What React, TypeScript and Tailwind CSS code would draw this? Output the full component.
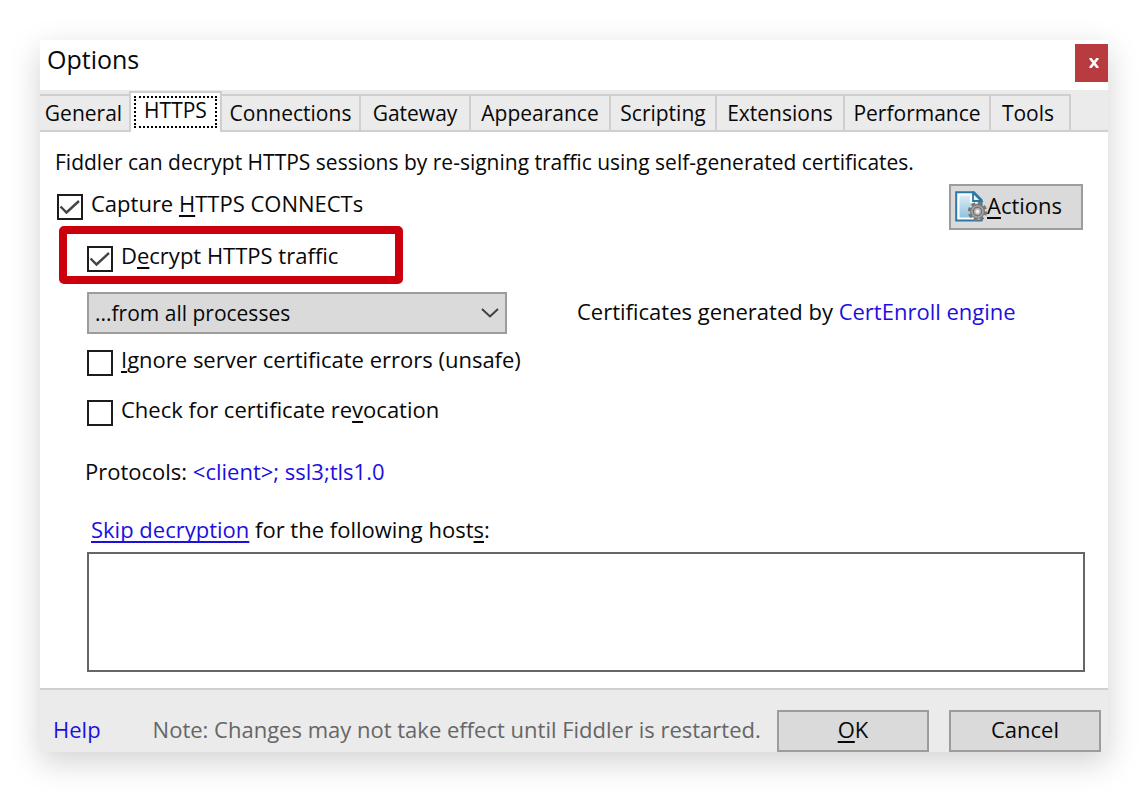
import { useState } from "react";
import type { ReactNode } from "react";

const tabs = [
  { name: "General", width: "w-[91px] pr-[2px]" },
  { name: "HTTPS", width: "w-[93px]" },
  { name: "Connections", width: "w-[141px]" },
  { name: "Gateway", width: "w-[112px]" },
  { name: "Appearance", width: "w-[142px]" },
  { name: "Scripting", width: "w-[108px]" },
  { name: "Extensions", width: "w-[130px]" },
  { name: "Performance", width: "w-[148px]" },
  { name: "Tools", width: "w-[82px] pr-1" },
];

function Key({ children }: { children: ReactNode }) {
  return (
    <span className="underline decoration-2 underline-offset-3 [text-decoration-skip-ink:none]">
      {children}
    </span>
  );
}

function CheckRow({ id, initial = false, children }: { id: string; initial?: boolean; children: ReactNode }) {
  const [checked, setChecked] = useState(initial);
  return (
    <div className="flex h-[30px] items-center gap-2">
      <span className="grid size-[26px] shrink-0">
        <input
          id={id}
          type="checkbox"
          checked={checked}
          onChange={(e) => setChecked(e.target.checked)}
          className="col-start-1 row-start-1 size-[26px] appearance-none border-2 border-[#1c1c1c] bg-white"
        />
        {checked && (
          <svg
            viewBox="0 0 26 26"
            className="pointer-events-none col-start-1 row-start-1 size-[26px]"
            fill="none"
            stroke="#444"
            strokeWidth="2.4"
            aria-hidden="true"
          >
            <path d="M3.5 12.5L9.5 18.5L22 7" />
          </svg>
        )}
      </span>
      <label htmlFor={id} className="pb-[7px] leading-[23px]">
        {children}
      </label>
    </div>
  );
}

function ActionsIcon() {
  return (
    <svg viewBox="0 0 32 32" className="size-8 shrink-0" aria-hidden="true">
      <defs>
        <linearGradient id="page" x1="0" y1="0" x2="0" y2="1">
          <stop offset="0" stopColor="#dcecf5" />
          <stop offset="1" stopColor="#8fc3dc" />
        </linearGradient>
      </defs>
      <path d="M1.2 1.2H19L26.5 9V29.5H1.2Z" fill="#fff" stroke="#2a78a8" strokeWidth="2" />
      <path d="M4.5 4.5H15V12H23V26.5H4.5Z" fill="url(#page)" />
      <path d="M18 1.5V10H26.5Z" fill="#e8f4fa" stroke="#2a78a8" strokeWidth="1.8" />
      <circle cx="22.5" cy="20.5" r="8.2" fill="none" stroke="#777" strokeWidth="3" strokeDasharray="3.8 2.64" />
      <circle cx="22.5" cy="20.5" r="5.4" fill="#b5b5b5" stroke="#777" strokeWidth="4" />
      <circle cx="22.5" cy="20.5" r="5.6" fill="none" stroke="#a9a9a9" strokeWidth="1.4" />
      <circle cx="22.5" cy="20.5" r="2" fill="#eee" />
    </svg>
  );
}

export default function App() {
  const [active, setActive] = useState("HTTPS");
  return (
    <div className="min-h-screen bg-white p-10 font-['Open_Sans','Noto_Sans',sans-serif] text-[22px] text-[#080808]">
      <div role="dialog" aria-labelledby="title" className="bg-white shadow-[0_10px_30px_rgba(0,0,0,0.18)]">
        <header className="flex h-[50px] items-start justify-between pl-[7px]">
          <h1 id="title" className="text-[25px] leading-[38px]">
            Options
          </h1>
          <button
            type="button"
            aria-label="Close"
            className="mt-1 flex h-[38px] w-[33px] items-center justify-center bg-[#b83b3f] pl-1"
          >
            <svg viewBox="0 0 10 10" className="size-[10px]" stroke="#fff" strokeWidth="2.6" aria-hidden="true">
              <path d="M1 0L9 10M9 0L1 10" />
            </svg>
          </button>
        </header>

        <div
          role="tablist"
          className="flex h-[42px] items-end bg-[#ebebeb] text-[21px] shadow-[inset_0_-2px_0_#cfcfcf]"
        >
          {tabs.map(({ name, width }, i) => {
            const on = name === active;
            return (
              <button
                key={name}
                type="button"
                role="tab"
                aria-selected={on}
                onClick={() => setActive(name)}
                className={`${width} ${i === 0 ? "border-l-0" : "-ml-[2px] border-l-2"} shrink-0 border-t-2 border-r-2 border-[#cfcfcf] ${
                  on ? "z-10 h-[41px] bg-white p-[3px] pb-1" : "h-[38px] border-b-2 bg-[#ebebeb] pt-[2px]"
                }`}
              >
                {on ? (
                  <span className="flex h-8 items-center justify-center border-2 border-dotted border-black pb-[2px]">
                    {name}
                  </span>
                ) : (
                  name
                )}
              </button>
            );
          })}
        </div>

        <main className="pt-4 pr-[23px] pb-4 pl-[15px]">
          <p className="text-[21px] leading-7">
            Fiddler can decrypt HTTPS sessions by re-signing traffic using self-generated certificates.
          </p>

          <div className="mt-2 flex h-[46px] items-center justify-between pl-[2px]">
            <CheckRow id="capture" initial>
              Capture <Key>H</Key>TTPS CONNECTs
            </CheckRow>
            <button
              type="button"
              className="mr-[2px] flex h-[46px] w-[134px] items-center border-2 border-[#9c9c9c] bg-[#dadada] pl-1"
            >
              <ActionsIcon />
              <span className="pb-[3px]">
                <Key>A</Key>ctions
              </span>
            </button>
          </div>

          <div className="-mt-1 ml-1 w-[344px] rounded-[5px] border-8 border-[#cc000c] pt-[10px] pb-[2px] pl-5">
            <CheckRow id="decrypt" initial>
              D<Key>e</Key>crypt HTTPS traffic
            </CheckRow>
          </div>

          <div className="pl-8">
            <div className="mt-2 flex h-[42px] items-center">
              <div className="grid w-[420px]">
                <select
                  aria-label="Processes to decrypt"
                  className="col-start-1 row-start-1 h-[42px] appearance-none border-2 border-[#9c9c9c] bg-[#dadada] pt-[2px] pl-[6px] text-[21px]"
                >
                  <option>...from all processes</option>
                  <option>...from browsers only</option>
                  <option>...from non-browsers only</option>
                  <option>...from remote clients only</option>
                </select>
                <svg
                  viewBox="0 0 18 10"
                  className="pointer-events-none col-start-1 row-start-1 mr-2 h-[10px] w-[18px] self-center justify-self-end"
                  fill="none"
                  stroke="#404040"
                  strokeWidth="2"
                  aria-hidden="true"
                >
                  <path d="M1 1L9 8.5L17 1" />
                </svg>
              </div>
              <p className="ml-[70px] pb-1 leading-7">
                Certificates generated by{" "}
                <a href="#engine" className="text-[#1c0fe0]">
                  CertEnroll engine
                </a>
              </p>
            </div>

            <div className="mt-[14px]">
              <CheckRow id="ignore">
                <Key>I</Key>gnore server certificate errors (unsafe)
              </CheckRow>
            </div>
            <div className="mt-5">
              <CheckRow id="revocation">
                Check for certificate re<Key>v</Key>ocation
              </CheckRow>
            </div>

            <p className="mt-[29px] -ml-[2px] leading-7">
              Protocols:{" "}
              <a href="#protocols" className="text-[#1c0fe0]">
                &lt;client&gt;; ssl3;tls1.0
              </a>
            </p>

            <p className="mt-[30px] pl-1 leading-7">
              <a
                href="#skip"
                className="text-[#1c0fe0] underline decoration-2 underline-offset-3 [text-decoration-skip-ink:none]"
              >
                Skip decryption
              </a>{" "}
              <label htmlFor="hosts">
                for the following host<Key>s</Key>:
              </label>
            </p>
            <textarea
              id="hosts"
              className="mt-[9px] block h-[120px] w-full resize-none border-2 border-[#666] bg-white p-2"
            />
          </div>
        </main>

        <footer className="flex items-center border-t-2 border-[#cfcfcf] bg-[#ebebeb] pt-5 pr-[7px] pl-[13px]">
          <a href="#help" className="pb-[3px] text-[#1c0fe0]">
            Help
          </a>
          <p className="ml-[52px] flex-1 pb-[3px] whitespace-nowrap text-[#666]">
            Note: Changes may not take effect until Fiddler is restarted.
          </p>
          <button type="button" className="h-[42px] w-[152px] border-2 border-[#9c9c9c] bg-[#dadada] pb-[3px]">
            <Key>O</Key>K
          </button>
          <button type="button" className="ml-5 h-[42px] w-[152px] border-2 border-[#9c9c9c] bg-[#dadada] pb-[3px]">
            Cancel
          </button>
        </footer>
      </div>
    </div>
  );
}
